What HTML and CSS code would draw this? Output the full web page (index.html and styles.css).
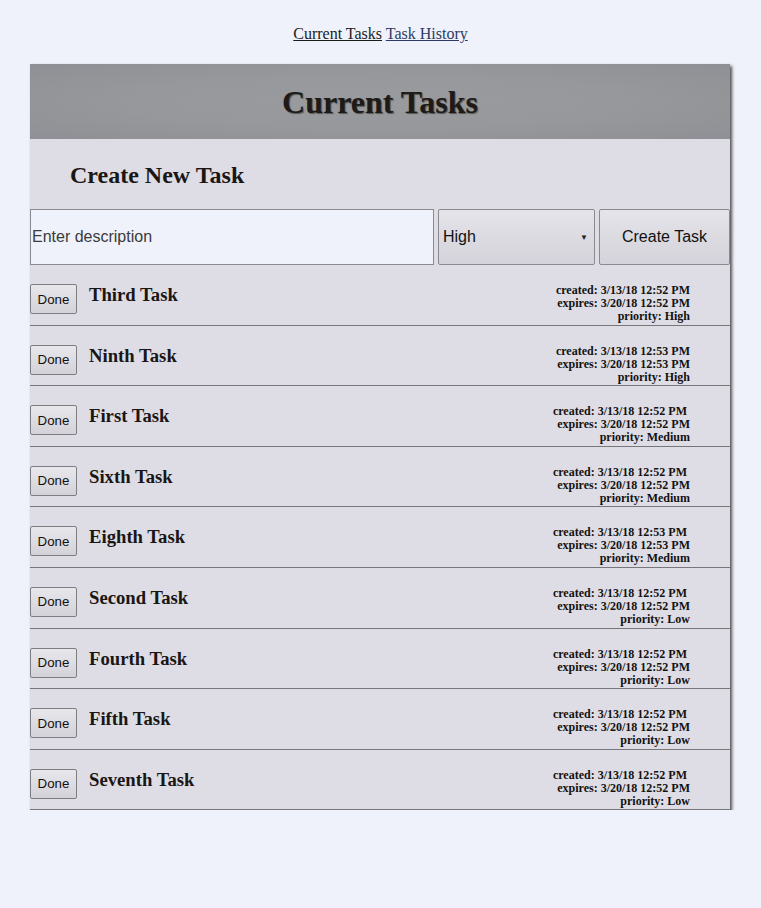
FILE: index.html
```html
<!DOCTYPE html>
<html>
<head>
<meta charset="utf-8">
<link rel="stylesheet" href="styles.css">
</head>
<body>
<nav class="nav"><a href="#" class="nav-current">Current Tasks</a> <a href="#" class="nav-history">Task History</a></nav>
<main class="panel">
  <header class="panel-head"><h1 class="panel-title">Current Tasks</h1></header>
  <h2 class="create-title">Create New Task</h2>
  <form class="create-form">
    <input class="desc" type="text" placeholder="Enter description">
    <div class="prio"><span>High</span><span class="arrow">▼</span></div>
    <button type="button" class="create-btn">Create Task</button>
  </form>
  <ul class="tasks">
    <li class="task"><button class="done" type="button">Done</button><h3 class="task-name">Third Task</h3><div class="meta"><div>created: 3/13/18 12:52 PM</div><div>expires: 3/20/18 12:52 PM</div><div>priority: High</div></div></li>
    <li class="task"><button class="done" type="button">Done</button><h3 class="task-name">Ninth Task</h3><div class="meta"><div>created: 3/13/18 12:53 PM</div><div>expires: 3/20/18 12:53 PM</div><div>priority: High</div></div></li>
    <li class="task"><button class="done" type="button">Done</button><h3 class="task-name">First Task</h3><div class="meta"><div class="shift">created: 3/13/18 12:52 PM</div><div>expires: 3/20/18 12:52 PM</div><div>priority: Medium</div></div></li>
    <li class="task"><button class="done" type="button">Done</button><h3 class="task-name">Sixth Task</h3><div class="meta"><div class="shift">created: 3/13/18 12:52 PM</div><div>expires: 3/20/18 12:52 PM</div><div>priority: Medium</div></div></li>
    <li class="task"><button class="done" type="button">Done</button><h3 class="task-name">Eighth Task</h3><div class="meta"><div class="shift">created: 3/13/18 12:53 PM</div><div>expires: 3/20/18 12:53 PM</div><div>priority: Medium</div></div></li>
    <li class="task"><button class="done" type="button">Done</button><h3 class="task-name">Second Task</h3><div class="meta"><div class="shift">created: 3/13/18 12:52 PM</div><div>expires: 3/20/18 12:52 PM</div><div>priority: Low</div></div></li>
    <li class="task"><button class="done" type="button">Done</button><h3 class="task-name">Fourth Task</h3><div class="meta"><div class="shift">created: 3/13/18 12:52 PM</div><div>expires: 3/20/18 12:52 PM</div><div>priority: Low</div></div></li>
    <li class="task"><button class="done" type="button">Done</button><h3 class="task-name">Fifth Task</h3><div class="meta"><div class="shift">created: 3/13/18 12:52 PM</div><div>expires: 3/20/18 12:52 PM</div><div>priority: Low</div></div></li>
    <li class="task"><button class="done" type="button">Done</button><h3 class="task-name">Seventh Task</h3><div class="meta"><div class="shift">created: 3/13/18 12:52 PM</div><div>expires: 3/20/18 12:52 PM</div><div>priority: Low</div></div></li>
  </ul>
</main>
</body>
</html>
```
FILE: styles.css
```css
html, body {
  margin: 0;
  padding: 0;
  background: #eff2fa;
  font-family: "Liberation Serif", "Times New Roman", serif;
  color: #1a1a1a;
}
.nav {
  text-align: center;
  font-size: 16px;
  line-height: 18px;
  padding-top: 25px;
  height: 40px;
  box-sizing: border-box;
}
.nav a { text-decoration: underline; }
.nav-current { color: #1c1c1c; }
.nav-history { color: #2e3a66; }
.panel {
  width: 700px;
  margin: 24px 0 0 30px;
  background: #dedde5;
  box-shadow: 2px 2px 3px rgba(50, 50, 50, 0.85);
}
.panel-head {
  height: 75px;
  box-sizing: border-box;
  padding-top: 2px;
  display: flex;
  align-items: center;
  justify-content: center;
  background: radial-gradient(ellipse at 50% 50%, #999b9e 0%, #96989b 50%, #8e9095 100%);
}
.panel-title {
  margin: 0;
  font-size: 32px;
  font-weight: bold;
  color: #1e1a18;
  text-shadow: 1px 1px 1px #555;
}
.create-title {
  margin: 0;
  height: 70px;
  box-sizing: border-box;
  padding-top: 2px;
  display: flex;
  align-items: center;
  padding-left: 40px;
  font-size: 24px;
  font-weight: bold;
  color: #1a1614;
}
.create-form {
  display: flex;
  gap: 4px;
  height: 56px;
  margin: 0;
}
.desc {
  width: 404px;
  box-sizing: border-box;
  height: 56px;
  margin: 0;
  border: 1px solid #8a8a8e;
  background: #eff2fa;
  padding: 0 0 0 1px;
  font-family: "Liberation Sans", Arial, sans-serif;
  font-size: 16px;
  color: #333;
}
.desc::placeholder { color: #3a3a3a; opacity: 1; }
.prio {
  width: 157px;
  box-sizing: border-box;
  border: 1px solid #8a8a8e;
  border-radius: 2px;
  background: linear-gradient(#e5e4ea, #d4d2da);
  display: flex;
  align-items: center;
  justify-content: space-between;
  padding: 0 6px 0 4px;
  font-family: "Liberation Sans", Arial, sans-serif;
  font-size: 16px;
  color: #111;
}
.arrow { font-size: 8px; color: #222; }
.create-btn {
  width: 131px;
  box-sizing: border-box;
  border: 1px solid #8a8a8e;
  border-radius: 2px;
  background: linear-gradient(#e5e4ea, #d4d2da);
  font-family: "Liberation Sans", Arial, sans-serif;
  font-size: 16px;
  color: #111;
  margin: 0;
  padding: 0;
}
.tasks {
  list-style: none;
  margin: 0;
  padding: 0;
}
.task {
  height: 60.6px;
  box-sizing: border-box;
  border-bottom: 1px solid #77767b;
  display: flex;
  align-items: flex-start;
}
.task:last-child { height: 60.2px; }
.done {
  margin: 19px 0 0 0;
  width: 47px;
  height: 30px;
  box-sizing: border-box;
  border: 1px solid #7e7e82;
  border-radius: 2px;
  background: linear-gradient(#e8e7ec, #d3d2d8);
  font-family: "Liberation Sans", Arial, sans-serif;
  font-size: 13.3px;
  color: #111;
  padding: 0;
}
.task-name {
  margin: 19px 0 0 12px;
  font-size: 18.7px;
  line-height: 22px;
  font-weight: bold;
  color: #1a1614;
  flex: 1;
}
.meta {
  margin: 19px 40px 0 0;
  text-align: right;
  font-size: 12px;
  line-height: 13px;
  font-weight: bold;
  color: #141210;
}
.shift { padding-right: 3px; }
```
